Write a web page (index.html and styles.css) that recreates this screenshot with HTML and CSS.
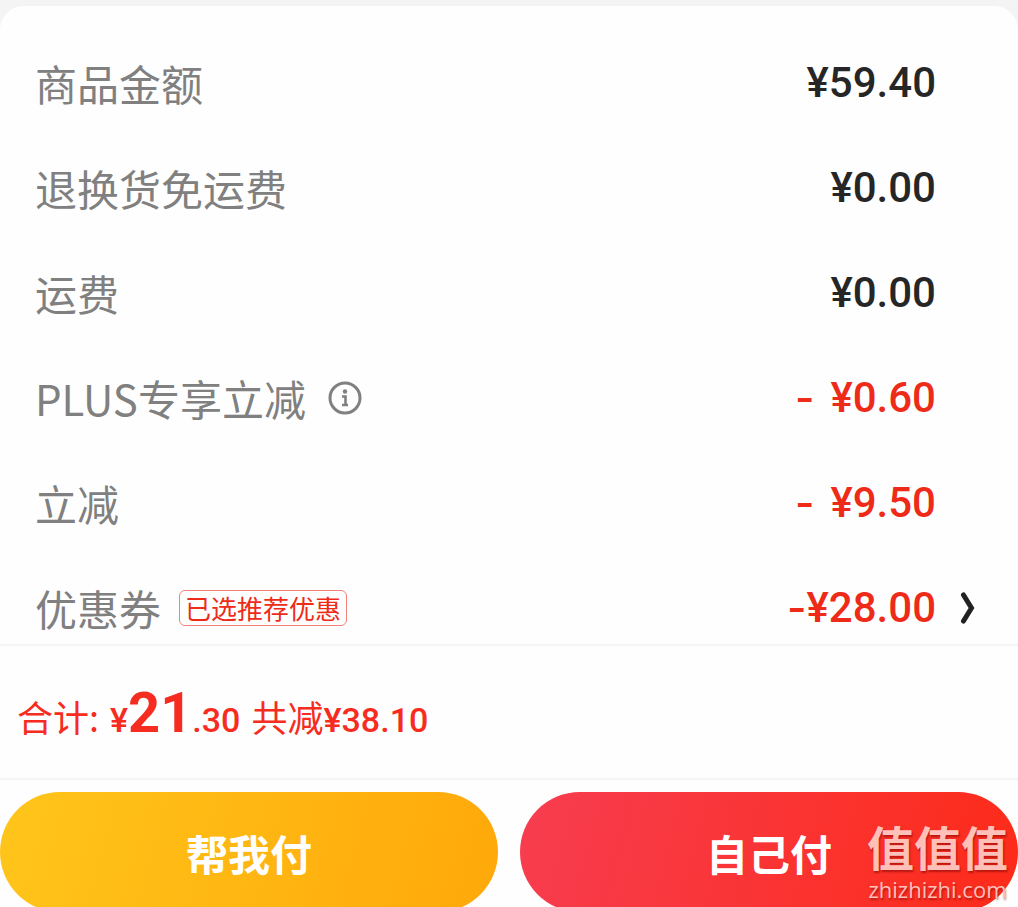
FILE: index.html
```html
<!DOCTYPE html>
<html lang="zh-CN">
  <head>
    <meta charset="UTF-8" />
    <meta name="viewport" content="width=device-width, initial-scale=1.0" />
    <title>结算</title>
    <link rel="stylesheet" href="styles.css">
  </head>
  <body>
    <main class="card">
      <div class="price-list">
        <div class="row">
          <span class="label">商品金额</span>
          <span class="amount">¥59.40</span>
        </div>
        <div class="row">
          <span class="label">退换货免运费</span>
          <span class="amount">¥0.00</span>
        </div>
        <div class="row">
          <span class="label">运费</span>
          <span class="amount">¥0.00</span>
        </div>
        <div class="row">
          <span class="label">PLUS专享立减</span>
          <button class="info-button" aria-label="说明">
            <svg width="34" height="34" viewBox="0 0 34 34" fill="none" stroke="#808080">
              <circle cx="17" cy="17" r="15" stroke-width="3" />
              <circle cx="17" cy="10.500" r="2.200" fill="#808080" stroke="none" />
              <path d="M14 15.500h3.500V24M14 24h6" stroke-width="2.600" />
            </svg>
          </button>
          <span class="amount discount"><span class="minus">-</span>¥0.60</span>
        </div>
        <div class="row">
          <span class="label">立减</span>
          <span class="amount discount"><span class="minus">-</span>¥9.50</span>
        </div>
        <div class="row">
          <span class="label">优惠券</span>
          <span class="tag">已选推荐优惠</span>
          <span class="amount discount"><span class="minus tight">-</span>¥28.00</span>
          <button class="more-button" aria-label="选择优惠券">
            <svg width="16" height="32" viewBox="0 0 16 32" fill="none" stroke="#222">
              <path d="M3.500 3L11.500 16L3.500 29" stroke-width="5" stroke-linecap="round" />
            </svg>
          </button>
        </div>
      </div>

      <div class="total">
        <span class="total-label">合计:</span>
        <span class="total-price"><span>¥</span><strong>21</strong><span>.30</span></span>
        <span class="total-label">共减<span class="total-saved">¥38.10</span></span>
      </div>

      <div class="actions">
        <button class="pay-button friend">帮我付</button>
        <button class="pay-button self">自己付</button>
      </div>
    </main>

    <div class="watermark">
      <span class="watermark-name">值值值</span>
      <span class="watermark-site">zhizhizhi.com</span>
    </div>
  </body>
</html>
```
FILE: styles.css
```css
* {
  box-sizing: border-box;
  margin: 0;
  padding: 0;
}
html {
  height: 100%;
}
body {
  position: relative;
  height: 100%;
  overflow: hidden;
  padding-top: 6px;
  background-color: #f4f4f4;
  font-family: Roboto, "Noto Sans CJK SC", sans-serif;
}
button {
  border: none;
  background: none;
  font-family: inherit;
  cursor: pointer;
}
svg {
  display: block;
}
.card {
  background-color: #fefefe;
  border-radius: 24px 24px 0 0;
}
.price-list {
  display: flex;
  flex-direction: column;
  gap: 45px;
  padding: 47px 82px 6px 35px;
  border-bottom: 2px solid #f5f5f5;
}
.row {
  display: flex;
  align-items: center;
  height: 60px;
}
.label {
  color: #808080;
  font-family: "Noto Sans CJK SC", sans-serif;
  font-size: 42px;
  line-height: 60px;
}
.amount {
  display: flex;
  align-items: center;
  margin-left: auto;
  color: #262626;
  font-size: 42px;
  font-weight: 500;
  line-height: 60px;
}
.discount {
  color: #ee2b18;
}
.minus {
  margin-right: 16px;
  font-family: Inter, sans-serif;
}
.tight {
  margin-right: 0;
}
.info-button {
  margin-left: 22px;
}
.tag {
  margin-left: 18px;
  padding: 0 5px;
  border: 1px solid #f08078;
  border-radius: 6px;
  color: #ee2b18;
  font-family: "Noto Sans CJK SC", sans-serif;
  font-size: 26px;
  line-height: 34px;
}
.more-button {
  width: 16px;
  margin-left: 24px;
  margin-right: -40px;
}
.total {
  display: flex;
  align-items: baseline;
  gap: 11px;
  padding: 27px 17px 18px;
  border-bottom: 2px solid #f5f5f5;
  color: #f72c20;
  line-height: 80px;
}
.total-label {
  font-family: "Noto Sans CJK SC", sans-serif;
  font-size: 36px;
}
.total-price,
.total-saved {
  font-family: Roboto, sans-serif;
  font-size: 34px;
  font-weight: 500;
}
.total-price strong {
  font-size: 56px;
  font-weight: 700;
}
.actions {
  display: flex;
  gap: 22px;
  padding-top: 12px;
}
.pay-button {
  flex: 1;
  height: 120px;
  border-radius: 60px;
  color: #fff;
  font-family: "Noto Sans CJK SC", sans-serif;
  font-size: 42px;
  font-weight: 700;
}
.friend {
  background: linear-gradient(105deg, #ffc51a, #ffa80a);
}
.self {
  background: linear-gradient(105deg, #f73d50, #fd2b18);
}
/* site mark, lies over the bottom right corner */
.watermark {
  position: absolute;
  right: 10px;
  bottom: 4px;
  display: flex;
  flex-direction: column;
  align-items: center;
  color: #ffc0ba;
  text-shadow: 1px 2px 2px rgba(120, 0, 0, 0.5);
  pointer-events: none;
}
.watermark-name {
  font-family: "Noto Sans CJK SC", sans-serif;
  font-size: 47px;
  font-weight: 700;
  line-height: 58px;
}
.watermark-site {
  font-family: "Open Sans", sans-serif;
  font-size: 22px;
  line-height: 28px;
}
```
